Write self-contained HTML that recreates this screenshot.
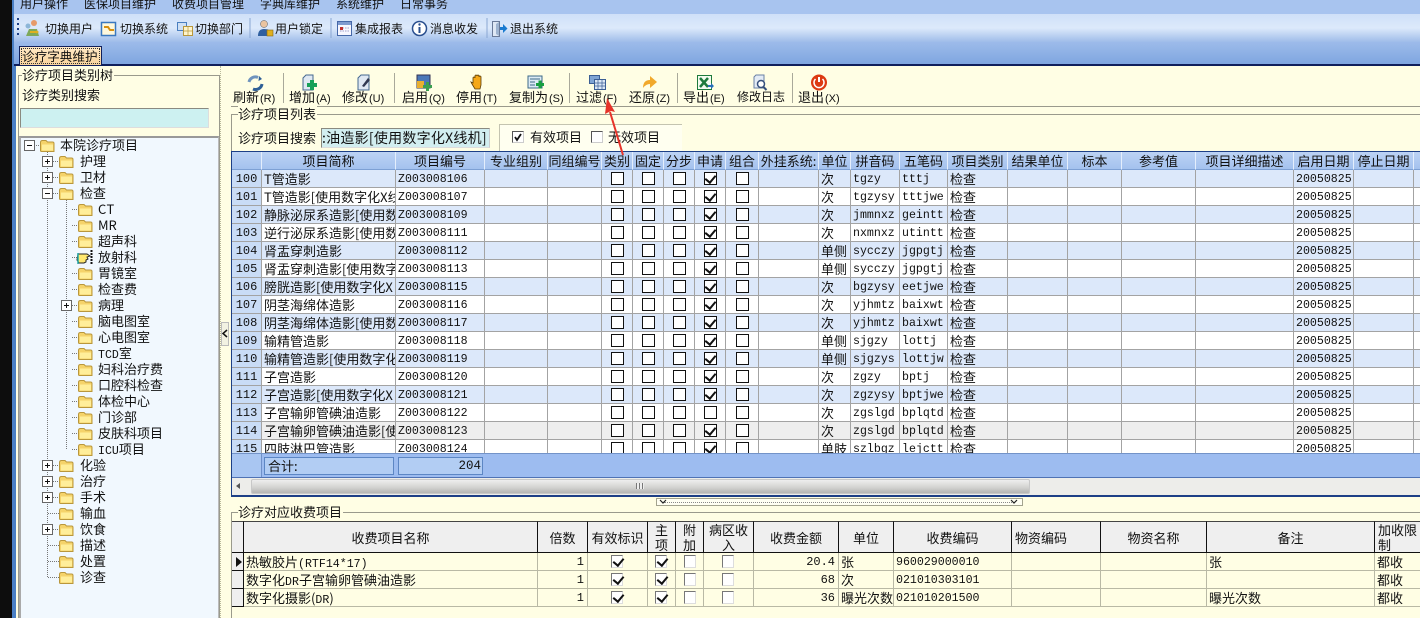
<!DOCTYPE html>
<html lang="zh"><head><meta charset="utf-8"><title>诊疗字典维护</title>
<style>
*{box-sizing:border-box}
html,body{margin:0;padding:0;width:1420px;height:618px;overflow:hidden;background:#fffee4;
font:13px/16px "Noto Sans CJK SC","WenQuanYi Zen Hei","Liberation Sans",sans-serif;color:#111}
.a{position:absolute;white-space:nowrap}
.b{position:absolute}
.s12{font-size:12px}
.lab{position:absolute;top:89px;white-space:nowrap;letter-spacing:0}
.lab span{font:11px/10px "Liberation Sans",sans-serif;margin-left:1px}
.tr{position:absolute;white-space:nowrap;line-height:16px;height:16px}
.tr.l0{left:60px}.tr.l1{left:80px}.tr.l2{left:98px}
.ml{font:11.6px/10px "Liberation Mono",monospace}
table{border-collapse:separate;border-spacing:0;table-layout:fixed;position:absolute;left:0;top:0}
#g td,#g th{height:18px;padding:0 0 0 2px;border-right:1px solid #a3a3a3;border-bottom:1px solid #a3a3a3;overflow:hidden;white-space:nowrap;font-weight:400;line-height:16px;position:relative}
#g thead th{background:linear-gradient(#bcd3f4,#a4c2ee);border-right:1px solid #e4eefc;border-bottom:1px solid #7da0d4;text-align:center;padding:0;font-size:13px}
#g tbody th{background:#c9dcf6;text-align:center;padding:2px 0 0;font:12px/15px "Liberation Mono",monospace}
#g tr.e td{background:#dce8fa}
#g tr.o td{background:#fff}
#g tr.s td{background:#eeeeee}
#g tbody td:nth-child(3),#g tbody td:nth-child(13),#g tbody td:nth-child(14),#g tbody td:nth-child(20){font:11.6px/15px "Liberation Mono",monospace;padding-top:2px}
#g tbody td:nth-child(n+6):nth-child(-n+10)::after{content:"";position:absolute;left:9px;top:2px;width:11px;height:11px;border:1px solid #111;background:#fff}
#g tbody td:nth-child(10)::after{left:10px!important}
#g tbody tr:not(.n) td:nth-child(9)::before{content:"";position:absolute;z-index:2;left:12px;top:3px;width:5px;height:8px;border:solid #111;border-width:0 2px 2px 0;transform:rotate(40deg)}
#h td,#h th{height:18px;padding:0 0 0 2px;border-right:1px solid #b9b9a5;border-bottom:1px solid #b9b9a5;overflow:hidden;white-space:nowrap;font-weight:400;line-height:16px;position:relative;background:#fffee4}
#h thead th{height:32px;background:#efefef;border-right:1px solid #111;border-bottom:1px solid #111;border-top:1px solid #444;text-align:center;padding:0;line-height:15px;white-space:normal}
#h tbody th{background:#efefef;border-right:1px solid #111;border-bottom:1px solid #111;padding:0}
#h .r{text-align:right;padding:2px 3px 0 0;font:12px/15px "Liberation Mono",monospace}
#h .m{font:11.6px/15px "Liberation Mono",monospace;padding-top:2px}
#h td i{position:absolute;top:2px;width:12px;height:13px;border:1px solid #777;border-right-color:#ddd;border-bottom-color:#ddd;background:#fff;display:block}
#h i.k::after{content:"";position:absolute;left:3px;top:0;width:5px;height:8px;border:solid #111;border-width:0 2px 2px 0;transform:rotate(40deg)}
</style></head><body>

<div class="b" style="left:0;top:0;width:12px;height:618px;background:#0d0d0d"></div>
<div class="b" style="left:12px;top:0;width:4px;height:618px;background:#4a7fc4"></div>
<div class="b s12" style="left:14px;top:0;width:1406px;height:14px;background:#a8c4ef;overflow:hidden">
<span class="a" style="left:6px;top:-4px">用户操作</span><span class="a" style="left:70px;top:-4px">医保项目维护</span><span class="a" style="left:158px;top:-4px">收费项目管理</span><span class="a" style="left:246px;top:-4px">字典库维护</span><span class="a" style="left:322px;top:-4px">系统维护</span><span class="a" style="left:386px;top:-4px">日常事务</span></div>
<div class="b" style="left:14px;top:14px;width:1406px;height:28px;background:linear-gradient(#cfe0f8,#dce9fb 50%,#9fbce9)"></div>
<div class="b" style="left:14px;top:42px;width:1406px;height:22px;background:linear-gradient(#9dbbea,#7fa6e0)"></div>
<div class="b" style="left:14px;top:64px;width:1406px;height:2px;background:#0f1f5c"></div>
<div class="a s12" style="left:45px;top:21px">切换用户</div><div class="a s12" style="left:120px;top:21px">切换系统</div><div class="a s12" style="left:195px;top:21px">切换部门</div><div class="a s12" style="left:275px;top:21px">用户锁定</div><div class="a s12" style="left:355px;top:21px">集成报表</div><div class="a s12" style="left:430px;top:21px">消息收发</div><div class="a s12" style="left:510px;top:21px">退出系统</div>

<div class="b" style="left:19px;top:46px;width:83px;height:19px;background:linear-gradient(#ffe9c6,#f9d49c);border:1px solid #10205c;border-bottom:0"></div>
<div class="b" style="left:21px;top:48px;width:79px;height:16px;border:1px dotted #333"></div>
<div class="a" style="left:22px;top:48px;font-size:12.6px">诊疗字典维护</div>

<!-- left panel -->
<div class="b" style="left:18px;top:75px;width:202px;height:543px;border:1px solid #9a9a8c;border-bottom:0"></div>
<div class="a" style="left:22px;top:67px;background:#fffee4;padding:0 1px 0 0">诊疗项目类别树</div>
<div class="a" style="left:22px;top:87px">诊疗类别搜索</div>
<div class="b" style="left:20px;top:108px;width:189px;height:20px;background:#cdf1f1;border:1px solid #8a8a80;border-right-color:#ddd;border-bottom-color:#ddd"></div>
<div class="b" style="left:19px;top:136px;width:200px;height:482px;background:#f1f8fe;border-top:2px solid #999;border-left:2px solid #aaa;border-right:1px solid #bbb"></div>

<div class="tr l0" style="top:137px">本院诊疗项目</div>
<div class="tr l1" style="top:153px">护理</div><div class="tr l1" style="top:169px">卫材</div><div class="tr l1" style="top:185px">检查</div>
<div class="tr l2" style="top:201px;font-size:13px;letter-spacing:.5px">CT</div><div class="tr l2" style="top:217px;font-size:13px">MR</div><div class="tr l2" style="top:233px">超声科</div><div class="tr l2" style="top:249px">放射科</div><div class="tr l2" style="top:265px">胃镜室</div><div class="tr l2" style="top:281px">检查费</div><div class="tr l2" style="top:297px">病理</div><div class="tr l2" style="top:313px">脑电图室</div><div class="tr l2" style="top:329px">心电图室</div><div class="tr l2" style="top:345px"><span class="ml">TCD</span>室</div><div class="tr l2" style="top:361px">妇科治疗费</div><div class="tr l2" style="top:377px">口腔科检查</div><div class="tr l2" style="top:393px">体检中心</div><div class="tr l2" style="top:409px">门诊部</div><div class="tr l2" style="top:425px">皮肤科项目</div><div class="tr l2" style="top:441px"><span class="ml">ICU</span>项目</div>
<div class="tr l1" style="top:457px">化验</div><div class="tr l1" style="top:473px">治疗</div><div class="tr l1" style="top:489px">手术</div><div class="tr l1" style="top:505px">输血</div><div class="tr l1" style="top:521px">饮食</div><div class="tr l1" style="top:537px">描述</div><div class="tr l1" style="top:553px">处置</div><div class="tr l1" style="top:569px">诊查</div>

<!-- splitter -->
<div class="b" style="left:221px;top:322px;width:8px;height:24px;background:#f2f2e2;border:1px solid #bbb"></div>
<div class="b" style="left:220px;top:66px;width:1px;height:552px;border-left:1px dotted #b8b89a"></div>

<!-- right toolbar -->
<div class="b" style="left:231px;top:66px;width:1189px;height:41px;background:#fffee4;border-bottom:1px solid #9a9a8c"></div>
<div class="lab" style="left:233px">刷新<span>(R)</span></div>
<div class="lab" style="left:289px">增加<span>(A)</span></div>
<div class="lab" style="left:342px">修改<span>(U)</span></div>
<div class="lab" style="left:402px">启用<span>(Q)</span></div>
<div class="lab" style="left:456px">停用<span>(T)</span></div>
<div class="lab" style="left:509px">复制为<span>(S)</span></div>
<div class="lab" style="left:576px">过滤<span>(F)</span></div>
<div class="lab" style="left:629px">还原<span>(Z)</span></div>
<div class="lab" style="left:683px">导出<span>(E)</span></div>
<div class="lab" style="left:737px;font-size:12px">修改日志</div>
<div class="lab" style="left:798px">退出<span>(X)</span></div>

<!-- list group -->
<div class="b" style="left:231px;top:114px;width:1189px;height:40px;border-top:1px solid #9a9a8c;border-left:1px solid #9a9a8c"></div>
<div class="a" style="left:238px;top:106px;background:#fffee4;padding:0 1px 0 0">诊疗项目列表</div>
<div class="a" style="left:238px;top:130px">诊疗项目搜索</div>
<div class="b" style="left:321px;top:128px;width:169px;height:20px;background:#d2eef0;border:1px solid #8a8a80;border-right-color:#ccc;border-bottom-color:#ddd;overflow:hidden"><span class="a" style="left:0;top:1px;font-size:14px;letter-spacing:.25px">:油造影[使用数字化X线机]</span></div>
<div class="b" style="left:499px;top:124px;width:183px;height:27px;background:#fffff0;border:1px solid #c4c4b0;border-right:0;border-bottom:0"></div>
<div class="b" style="left:512px;top:131px;width:12px;height:12px;background:#fff;border:1px solid #555;border-right-color:#ccc;border-bottom-color:#ccc"></div>
<div class="a" style="left:530px;top:129px">有效项目</div>
<div class="b" style="left:591px;top:131px;width:12px;height:12px;background:#fff;border:1px solid #555;border-right-color:#ccc;border-bottom-color:#ccc"></div>
<div class="a" style="left:608px;top:129px">无效项目</div>

<!-- main grid -->
<div class="b" style="left:231px;top:151px;width:1189px;height:346px;border-top:1px solid #1d3f86;border-left:1px solid #1d3f86;border-bottom:2px solid #1d3f86;background:#eee"></div>
<div class="b" id="g" style="left:232px;top:152px;width:1188px;height:301px;overflow:hidden;background:#fff">
<table style="width:1192px">
<colgroup><col style="width:30px"><col style="width:134px"><col style="width:89px"><col style="width:63px"><col style="width:54px"><col style="width:31px"><col style="width:31px"><col style="width:31px"><col style="width:31px"><col style="width:33px"><col style="width:60px"><col style="width:32px"><col style="width:49px"><col style="width:48px"><col style="width:60px"><col style="width:60px"><col style="width:54px"><col style="width:74px"><col style="width:98px"><col style="width:60px"><col style="width:60px"><col style="width:10px"></colgroup>
<thead><tr><th></th><th>项目简称</th><th>项目编号</th><th>专业组别</th><th>同组编号</th><th>类别</th><th>固定</th><th>分步</th><th>申请</th><th>组合</th><th>外挂系统:</th><th>单位</th><th>拼音码</th><th>五笔码</th><th>项目类别</th><th>结果单位</th><th>标本</th><th>参考值</th><th>项目详细描述</th><th>启用日期</th><th>停止日期</th><th></th></tr></thead>
<tbody>
<tr class="e"><th>100</th><td>T管造影</td><td>Z003008106</td><td></td><td></td><td></td><td></td><td></td><td></td><td></td><td></td><td>次</td><td>tgzy</td><td>tttj</td><td>检查</td><td></td><td></td><td></td><td></td><td>20050825</td><td></td><td></td></tr>
<tr class="o"><th>101</th><td>T管造影[使用数字化X线</td><td>Z003008107</td><td></td><td></td><td></td><td></td><td></td><td></td><td></td><td></td><td>次</td><td>tgzysy</td><td>tttjwe</td><td>检查</td><td></td><td></td><td></td><td></td><td>20050825</td><td></td><td></td></tr>
<tr class="e"><th>102</th><td>静脉泌尿系造影[使用数</td><td>Z003008109</td><td></td><td></td><td></td><td></td><td></td><td></td><td></td><td></td><td>次</td><td>jmmnxz</td><td>geintt</td><td>检查</td><td></td><td></td><td></td><td></td><td>20050825</td><td></td><td></td></tr>
<tr class="o"><th>103</th><td>逆行泌尿系造影[使用数</td><td>Z003008111</td><td></td><td></td><td></td><td></td><td></td><td></td><td></td><td></td><td>次</td><td>nxmnxz</td><td>utintt</td><td>检查</td><td></td><td></td><td></td><td></td><td>20050825</td><td></td><td></td></tr>
<tr class="e"><th>104</th><td>肾盂穿刺造影</td><td>Z003008112</td><td></td><td></td><td></td><td></td><td></td><td></td><td></td><td></td><td>单侧</td><td>sycczy</td><td>jgpgtj</td><td>检查</td><td></td><td></td><td></td><td></td><td>20050825</td><td></td><td></td></tr>
<tr class="o"><th>105</th><td>肾盂穿刺造影[使用数字</td><td>Z003008113</td><td></td><td></td><td></td><td></td><td></td><td></td><td></td><td></td><td>单侧</td><td>sycczy</td><td>jgpgtj</td><td>检查</td><td></td><td></td><td></td><td></td><td>20050825</td><td></td><td></td></tr>
<tr class="e"><th>106</th><td>膀胱造影[使用数字化X</td><td>Z003008115</td><td></td><td></td><td></td><td></td><td></td><td></td><td></td><td></td><td>次</td><td>bgzysy</td><td>eetjwe</td><td>检查</td><td></td><td></td><td></td><td></td><td>20050825</td><td></td><td></td></tr>
<tr class="o"><th>107</th><td>阴茎海绵体造影</td><td>Z003008116</td><td></td><td></td><td></td><td></td><td></td><td></td><td></td><td></td><td>次</td><td>yjhmtz</td><td>baixwt</td><td>检查</td><td></td><td></td><td></td><td></td><td>20050825</td><td></td><td></td></tr>
<tr class="e"><th>108</th><td>阴茎海绵体造影[使用数</td><td>Z003008117</td><td></td><td></td><td></td><td></td><td></td><td></td><td></td><td></td><td>次</td><td>yjhmtz</td><td>baixwt</td><td>检查</td><td></td><td></td><td></td><td></td><td>20050825</td><td></td><td></td></tr>
<tr class="o"><th>109</th><td>输精管造影</td><td>Z003008118</td><td></td><td></td><td></td><td></td><td></td><td></td><td></td><td></td><td>单侧</td><td>sjgzy</td><td>lottj</td><td>检查</td><td></td><td></td><td></td><td></td><td>20050825</td><td></td><td></td></tr>
<tr class="e"><th>110</th><td>输精管造影[使用数字化</td><td>Z003008119</td><td></td><td></td><td></td><td></td><td></td><td></td><td></td><td></td><td>单侧</td><td>sjgzys</td><td>lottjw</td><td>检查</td><td></td><td></td><td></td><td></td><td>20050825</td><td></td><td></td></tr>
<tr class="o"><th>111</th><td>子宫造影</td><td>Z003008120</td><td></td><td></td><td></td><td></td><td></td><td></td><td></td><td></td><td>次</td><td>zgzy</td><td>bptj</td><td>检查</td><td></td><td></td><td></td><td></td><td>20050825</td><td></td><td></td></tr>
<tr class="e"><th>112</th><td>子宫造影[使用数字化X</td><td>Z003008121</td><td></td><td></td><td></td><td></td><td></td><td></td><td></td><td></td><td>次</td><td>zgzysy</td><td>bptjwe</td><td>检查</td><td></td><td></td><td></td><td></td><td>20050825</td><td></td><td></td></tr>
<tr class="o n"><th>113</th><td>子宫输卵管碘油造影</td><td>Z003008122</td><td></td><td></td><td></td><td></td><td></td><td></td><td></td><td></td><td>次</td><td>zgslgd</td><td>bplqtd</td><td>检查</td><td></td><td></td><td></td><td></td><td>20050825</td><td></td><td></td></tr>
<tr class="s"><th>114</th><td>子宫输卵管碘油造影[使</td><td>Z003008123</td><td></td><td></td><td></td><td></td><td></td><td></td><td></td><td></td><td>次</td><td>zgslgd</td><td>bplqtd</td><td>检查</td><td></td><td></td><td></td><td></td><td>20050825</td><td></td><td></td></tr>
<tr class="o"><th>115</th><td>四肢淋巴管造影</td><td>Z003008124</td><td></td><td></td><td></td><td></td><td></td><td></td><td></td><td></td><td>单肢</td><td>szlbgz</td><td>lejctt</td><td>检查</td><td></td><td></td><td></td><td></td><td>20050825</td><td></td><td></td></tr>
</tbody></table></div>

<!-- totals -->
<div class="b" style="left:232px;top:453px;width:1188px;height:25px;background:#9dbcf0;border-top:1px solid #7393c8;border-bottom:1px solid #4f72b4"></div>
<div class="b" style="left:232px;top:454px;width:30px;height:23px;background:#a9c6f2;border-right:1px solid #6f90c8"></div>
<div class="b" style="left:264px;top:457px;width:130px;height:18px;background:#b2cdf3;border:1px solid #5c86c4"></div>
<div class="a" style="left:268px;top:458px">合计:</div>
<div class="b" style="left:398px;top:457px;width:85px;height:18px;background:#b2cdf3;border:1px solid #5c86c4"></div>
<div class="a" style="left:400px;top:458px;width:81px;text-align:right;font:12.5px/16px 'Liberation Mono',monospace">204</div>

<!-- scrollbar -->
<div class="b" style="left:232px;top:478px;width:1188px;height:17px;background:#ededea"></div>
<div class="b" style="left:251px;top:479px;width:779px;height:15px;background:linear-gradient(#eeeeee,#d4d4d2 55%,#b5b5b3);border:1px solid #c8c8c8;border-radius:2px"></div>
<div class="b" style="left:236px;top:483px;width:0;height:0;border:3px solid transparent;border-right:4px solid #555;border-left:0"></div>
<div class="b" style="left:636px;top:483px;width:8px;height:6px;background:repeating-linear-gradient(90deg,#777 0 1px,#eee 1px 3px)"></div>

<!-- split pill -->
<div class="b" style="left:656px;top:498px;width:367px;height:8px;border:1px solid #a3a38e;background:#fffff2"></div>
<div class="b" style="left:664px;top:502px;width:350px;border-top:1px dotted #888"></div>

<!-- charge group -->
<div class="b" style="left:231px;top:512px;width:1189px;height:106px;border-top:1px solid #9a9a8c;border-left:1px solid #9a9a8c"></div>
<div class="a" style="left:238px;top:504px;background:#fffee4;padding-right:1px">诊疗对应收费项目</div>

<div class="b" id="h" style="left:232px;top:521px;width:1188px;height:87px;overflow:hidden">
<table style="width:1201px">
<colgroup><col style="width:12px"><col style="width:294px"><col style="width:50px"><col style="width:60px"><col style="width:28px"><col style="width:28px"><col style="width:50px"><col style="width:85px"><col style="width:55px"><col style="width:118px"><col style="width:89px"><col style="width:106px"><col style="width:168px"><col style="width:58px"></colgroup>
<thead><tr><th></th><th>收费项目名称</th><th>倍数</th><th>有效标识</th><th>主<br>项</th><th>附<br>加</th><th>病区收<br>入</th><th>收费金额</th><th>单位</th><th>收费编码</th><th style="text-align:left;padding-left:3px">物资编码</th><th>物资名称</th><th>备注</th><th style="text-align:left;padding-left:3px;border-right:0">加收限<br>制</th></tr></thead>
<tbody>
<tr><th></th><td>热敏胶片<span class="ml">(RTF14*17)</span></td><td class="r">1</td><td><i class="k" style="left:23px"></i></td><td><i class="k" style="left:7px"></i></td><td><i style="left:8px"></i></td><td><i style="left:18px"></i></td><td class="r">20.4</td><td>张</td><td class="m">960029000010</td><td></td><td></td><td>张</td><td>都收</td></tr>
<tr><th></th><td>数字化<span class="ml">DR</span>子宫输卵管碘油造影</td><td class="r">1</td><td><i class="k" style="left:23px"></i></td><td><i class="k" style="left:7px"></i></td><td><i style="left:8px"></i></td><td><i style="left:18px"></i></td><td class="r">68</td><td>次</td><td class="m">021010303101</td><td></td><td></td><td></td><td>都收</td></tr>
<tr><th></th><td>数字化摄影(<span class="ml">DR</span>)</td><td class="r">1</td><td><i class="k" style="left:23px"></i></td><td><i class="k" style="left:7px"></i></td><td><i style="left:8px"></i></td><td><i style="left:18px"></i></td><td class="r">36</td><td>曝光次数</td><td class="m">021010201500</td><td></td><td></td><td>曝光次数</td><td>都收</td></tr>
</tbody></table></div>

<!-- graphics overlay -->
<svg class="b" style="left:0;top:0;pointer-events:none" width="1420" height="618" viewBox="0 0 1420 618">
<defs>
<g id="f"><path d="M.5 3.5Q.5 1.500 2.500 1.500H6L7.500 3H12.500Q14 3 14 4.500V12.500H1.500Q.5 12.500 .5 11.500Z" fill="#f5d36a" stroke="#b9973c"/><path d="M2 5.500H13V11.500H2Z" fill="#ffee9a"/></g>
<g id="p"><rect x=".5" y=".5" width="10" height="10" fill="#fff" stroke="#666"/><path d="M3 5.500H8" stroke="#111"/></g>
<g id="q"><rect x=".5" y=".5" width="10" height="10" fill="#fff" stroke="#666"/><path d="M3 5.500H8M5.500 3V8" stroke="#111"/></g>
</defs>
<!-- grip -->
<path d="M18 18v18" stroke="#1d3f86" stroke-width="2" stroke-dasharray="2 3"/>
<!-- toolbar separators -->
<path d="M250 18V38M331 18V38M487 18V38" stroke="#8aa7d3"/>
<!-- top toolbar icons -->
<circle cx="34" cy="23" r="3" fill="#e69a6a"/><circle cx="28" cy="26" r="2.500" fill="#8db6d8"/><path d="M26 36l3-7h8l2 7z" fill="#7ea85a"/><path d="M30 31h7l-2-2 4 3-4 3 2-2h-7z" fill="#e0b020"/>
<rect x="101.500" y="22.500" width="14" height="13" fill="#fff8dc" stroke="#3a78c0" stroke-width="1.500"/><path d="M104 27h4l2 3h4" fill="none" stroke="#d99010" stroke-width="2"/>
<rect x="177.500" y="22.500" width="9" height="8" fill="#cfe0f4" stroke="#4a7fc0"/><rect x="183.500" y="26.500" width="9" height="9" fill="#fff5cc" stroke="#b9973c"/><path d="M183 31h10M188 27v9" stroke="#b9973c" stroke-width=".7"/>
<circle cx="264" cy="24" r="3.500" fill="#eac4a0" stroke="#555" stroke-width=".5"/><path d="M258 36q0-7 6-7t5 3v4z" fill="#2f5f9f"/><rect x="267" y="30" width="6" height="6" fill="#e0b020" stroke="#8a6a10" stroke-width=".6"/>
<rect x="337.500" y="21.500" width="14" height="14" fill="#f7f7ff" stroke="#4668a8"/><rect x="338" y="22" width="13" height="3" fill="#7f9bd0"/><path d="M340 28h9M340 31h9" stroke="#a0a0c8" stroke-dasharray="1.500 1"/><rect x="340" y="27" width="3" height="3" fill="#c03030"/>
<circle cx="419.500" cy="28.500" r="7" fill="#fff" stroke="#2a4f8f" stroke-width="1.500"/><path d="M419.500 27V33" stroke="#2a4f8f" stroke-width="2"/><circle cx="419.500" cy="24.500" r="1.200" fill="#2a4f8f"/>
<path d="M492.500 21.500H499.500V36.500H492.500Z" fill="#dfe8f4" stroke="#6a7a98"/><path d="M499 22l-3 2v10l3 2" fill="#9fb4d0"/><path d="M500 27h3v-3l4.500 4.500L503 33v-3h-3z" fill="#1b7bd0"/>
<!-- tree lines -->
<g stroke="#777" stroke-dasharray="1 1" fill="none"><path d="M47.500 152V577.500M66.500 200V449.500M34 145.500H41M53 161.500H59M53 177.500H59M53 193.500H59M72 209.500H78M72 225.500H78M72 241.500H78M72 257.500H78M72 273.500H78M72 289.500H78M72 305.500H78M72 321.500H78M72 337.500H78M72 353.500H78M72 369.500H78M72 385.500H78M72 401.500H78M72 417.500H78M72 433.500H78M72 449.500H78M53 465.500H59M53 481.500H59M53 497.500H59M48 513.500H59M53 529.500H59M48 545.500H59M48 561.500H59M48 577.500H59"/></g>
<use href="#p" x="24" y="140"/><use href="#q" x="42" y="156"/><use href="#q" x="42" y="172"/><use href="#p" x="42" y="188"/><use href="#q" x="61" y="300"/><use href="#q" x="42" y="460"/><use href="#q" x="42" y="476"/><use href="#q" x="42" y="492"/><use href="#q" x="42" y="524"/>
<use href="#f" x="40" y="139"/><use href="#f" x="59" y="155"/><use href="#f" x="59" y="171"/><use href="#f" x="59" y="187"/>
<use href="#f" x="78" y="203"/><use href="#f" x="78" y="219"/><use href="#f" x="78" y="235"/><use href="#f" x="78" y="267"/><use href="#f" x="78" y="283"/><use href="#f" x="78" y="299"/><use href="#f" x="78" y="315"/><use href="#f" x="78" y="331"/><use href="#f" x="78" y="347"/><use href="#f" x="78" y="363"/><use href="#f" x="78" y="379"/><use href="#f" x="78" y="395"/><use href="#f" x="78" y="411"/><use href="#f" x="78" y="427"/><use href="#f" x="78" y="443"/>
<use href="#f" x="59" y="459"/><use href="#f" x="59" y="475"/><use href="#f" x="59" y="491"/><use href="#f" x="59" y="507"/><use href="#f" x="59" y="523"/><use href="#f" x="59" y="539"/><use href="#f" x="59" y="555"/><use href="#f" x="59" y="571"/>
<!-- hand cursor -->
<path d="M78 254h9l3 2-3 1 1 2-2 1v2l-2 1h-5l-2-3z" fill="#ffe870" stroke="#222"/><path d="M78 253v11" stroke="#2aa" stroke-width="1.500"/><path d="M91.500 250V264" stroke="#111" stroke-width="2" stroke-dasharray="2 1"/>
<!-- splitter arrow -->
<path d="M227 330l-4 3.500 4 3.500" fill="none" stroke="#111" stroke-width="1.500"/>
<!-- right toolbar separators -->
<path d="M283.500 73V103M394.500 73V103M569.500 73V103M677.500 73V103M792.500 73V103" stroke="#a9a99a"/>
<!-- toolbar icons -->
<g fill="none"><path d="M249 82a6.500 6.500 0 0 1 9-4.500" stroke="#6f93bd" stroke-width="3"/><path d="M262 84a6.500 6.500 0 0 1-9 5" stroke="#2f5f96" stroke-width="3"/><path d="M259 76l3 3-3.500 2z" fill="#2f5f96"/></g>
<path d="M303 78l3-3h7v15h-10z" fill="#dfe8f2" stroke="#45688f"/><rect x="307" y="83" width="10" height="4" fill="#18a058"/><rect x="310" y="80" width="4" height="10" fill="#18a058"/>
<path d="M358 78l3-3h8v15h-11z" fill="#dfe8f2" stroke="#45688f"/><path d="M362 86l6-8 2 2-6 7z" fill="#303850"/>
<rect x="417" y="75" width="13" height="13" fill="#4c78b8" stroke="#335"/><rect x="417" y="81" width="7" height="7" fill="#e8b030"/><rect x="423" y="85" width="9" height="3" fill="#3aa050"/><rect x="426" y="82" width="3" height="9" fill="#3aa050"/>
<path d="M473 83v-5a1 1 0 0 1 2 0v-2a1 1 0 0 1 2 0v0a1 1 0 0 1 2 0v1a1 1 0 0 1 2 0v8l-1 4h-5l-3-5-1-2z" fill="#f5a818" stroke="#5a3c08" stroke-width=".8"/>
<rect x="528" y="76" width="14" height="12" fill="#dcebf5" stroke="#3e6a88"/><path d="M530 79h10M530 82h5M530 85h5" stroke="#3e6a88"/><rect x="536" y="83" width="8" height="3" fill="#18a040"/><rect x="538.500" y="80.500" width="3" height="8" fill="#18a040"/>
<rect x="589.500" y="75.500" width="10" height="8" fill="#7fa4d4" stroke="#3c5f94"/><rect x="594.500" y="79.500" width="11" height="10" fill="#dce8f6" stroke="#3c5f94"/><path d="M595 83h10M595 86h10M598 80v9M602 80v9" stroke="#3c5f94" stroke-width=".7"/>
<path d="M643 88q0-8 7-8v-4l7 6-7 6v-4q-4 0-7 4z" fill="#f1a92b"/>
<rect x="697.500" y="75.500" width="14" height="14" fill="#f4fbf0" stroke="#1e7a3c"/><path d="M700 78l8 9M708 78l-8 9" stroke="#1e7a3c" stroke-width="2.500"/><path d="M708 85h3v-2l3 3-3 3v-2h-3z" fill="#2a6fb8"/>
<path d="M754 77l2-2h8v13h-10z" fill="#e3ebf5" stroke="#6a80a5"/><circle cx="761" cy="84" r="3.500" fill="#fff" stroke="#35507c" stroke-width="1.500"/><path d="M763.500 87l3 3" stroke="#35507c" stroke-width="2"/>
<circle cx="819" cy="82.500" r="8" fill="#dd3a12"/><path d="M819 77v5" stroke="#fff" stroke-width="2"/><path d="M815.500 79a5 5 0 1 0 7 0" fill="none" stroke="#fff" stroke-width="1.500"/>
<!-- check 有效项目 -->
<path d="M515 137l2 3 4-6" fill="none" stroke="#111" stroke-width="1.800"/>
<!-- red arrow -->
<path d="M623 155L610 112" stroke="#e6332a" stroke-width="2" fill="none"/><path d="M607 98L615 112 611 111 605 114z" fill="#e6332a"/>
<!-- grid pill chevrons -->
<path d="M660 500l3 3 3-3M1011 500l3 3 3-3" fill="none" stroke="#222" stroke-width="1.200"/>
<!-- row indicator -->
<path d="M236 557v10l6-5z" fill="#111"/>
</svg>
</body></html>
